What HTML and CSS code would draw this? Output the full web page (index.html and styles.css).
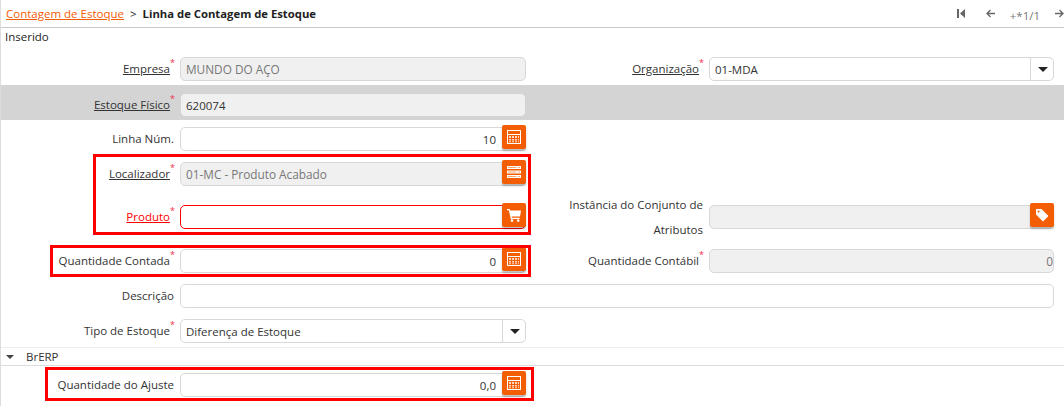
FILE: index.html
```html
<!DOCTYPE html>
<html lang="pt-BR">
<head>
  <meta charset="UTF-8" />
  <title>Linha de Contagem de Estoque</title>
  <link rel="stylesheet" href="styles.css">
</head>
<body>
  <svg class="sprites" width="0" height="0">
    <symbol id="calc" viewBox="0 0 14 14">
      <path fill="#fff" fill-rule="evenodd" d="M0 0h14v14H0zM1 1v3h12V1zM1 5v8h12V5z"/>
      <path fill="#ffd9c2" d="M2 6h2v2H2zM5 6h2v2H5zM8 6h2v2H8zM11 6h1v2h-1zM2 9h2v1.5H2zM5 9h2v1.5H5zM8 9h2v1.5H8zM11 9h1v1.5h-1zM2 11.2h2v1H2zM5 11.2h2v1H5zM8 11.2h2v1H8zM11 11.2h1v1h-1z"/>
    </symbol>
    <symbol id="locator" viewBox="0 0 15 13">
      <path fill="#fff" d="M0 0h15v3.4H0zM0 4.8h15v3.4H0zM0 9.6h15V13H0z"/>
      <path fill="#f9a26c" d="M1 1.2h9v1H1zM12 1.2h2v1h-2zM1 6h9v1H1zM12 6h2v1h-2zM1 10.8h9v1H1zM12 10.8h2v1h-2z"/>
    </symbol>
    <symbol id="cart" viewBox="0 0 14 14">
      <path fill="#fff" d="M0 1h2.6l.5 1.5H14l-1 6H4.6l.3 1.2H12.6V11H3.8L1.8 2.2H0z"/>
      <circle fill="#fff" cx="5" cy="12.6" r="1.3"/>
      <circle fill="#fff" cx="11.2" cy="12.6" r="1.3"/>
    </symbol>
    <symbol id="tag" viewBox="0 0 14 14">
      <path fill="#fff" fill-rule="evenodd" d="M1 1h5.5L13.5 8 8 13.5 1 6.5zM3.6 2.6a1 1 0 1 0 .01 0z"/>
    </symbol>
  </svg>

  <header class="title-bar">
    <div class="crumbs">
      <a class="crumb-link" href="#">Contagem de Estoque</a>
      <span class="crumb-sep">&gt;</span>
      <strong>Linha de Contagem de Estoque</strong>
    </div>
    <nav class="pager">
      <svg class="pager-first" viewBox="0 0 8 9"><path fill="#666" d="M0 0h2v9H0zM8 0v9L3 4.5z"/></svg>
      <svg class="pager-icon" viewBox="0 0 9 9"><path fill="none" stroke="#666" stroke-width="1.3" d="M9 4.5H1M4.5 1 1 4.5 4.5 8"/></svg>
      <span class="pager-text">+*1/1</span>
      <svg class="pager-icon" viewBox="0 0 9 9"><path fill="none" stroke="#666" stroke-width="1.3" d="M0 4.5h8M4.5 1 8 4.5 4.5 8"/></svg>
    </nav>
  </header>

  <div class="status">Inserido</div>

  <main class="form">
    <div class="row row-empresa">
      <label class="lbl"><u>Empresa</u><sup>*</sup></label>
      <div class="field field-half"><input class="inp ro" value="MUNDO DO AÇO" readonly></div>
      <label class="lbl lbl-right"><u>Organização</u><sup>*</sup></label>
      <div class="field field-right">
        <div class="combo"><input class="inp" value="01-MDA" readonly><span class="combo-btn"><i class="caret"></i></span></div>
      </div>
    </div>

    <div class="row row-band">
      <label class="lbl"><u>Estoque Físico</u><sup>*</sup></label>
      <div class="field field-half"><input class="inp band-inp" value="620074" readonly></div>
    </div>

    <div class="row row-linha">
      <label class="lbl">Linha Núm.</label>
      <div class="field field-half"><input class="inp num" value="10" readonly><button class="btn"><svg class="ico"><use href="#calc"/></svg></button></div>
    </div>

    <div class="row row-loc">
      <label class="lbl"><u>Localizador</u><sup>*</sup></label>
      <div class="field field-half"><input class="inp ro" value="01-MC - Produto Acabado" readonly><button class="btn"><svg class="ico"><use href="#locator"/></svg></button></div>
    </div>

    <div class="row row-prod">
      <label class="lbl lbl-red"><u>Produto</u><sup>*</sup></label>
      <div class="field field-half"><input class="inp inp-red" readonly><button class="btn"><svg class="ico"><use href="#cart"/></svg></button></div>
      <label class="lbl lbl-right lbl-two">Instância do Conjunto de Atributos</label>
      <div class="field field-right"><input class="inp ro" readonly><button class="btn"><svg class="ico"><use href="#tag"/></svg></button></div>
    </div>

    <div class="row row-qty">
      <label class="lbl">Quantidade Contada<sup>*</sup></label>
      <div class="field field-half"><input class="inp num" value="0" readonly><button class="btn"><svg class="ico"><use href="#calc"/></svg></button></div>
      <label class="lbl lbl-right">Quantidade Contábil<sup>*</sup></label>
      <div class="field field-right"><input class="inp ro num num-flush" value="0" readonly></div>
    </div>

    <div class="row row-desc">
      <label class="lbl">Descrição</label>
      <div class="field field-full"><input class="inp" readonly></div>
    </div>

    <div class="row row-tipo">
      <label class="lbl">Tipo de Estoque<sup>*</sup></label>
      <div class="field field-half">
        <div class="combo"><input class="inp" value="Diferença de Estoque" readonly><span class="combo-btn"><i class="caret"></i></span></div>
      </div>
    </div>

    <div class="group"><i class="caret caret-sm"></i><span>BrERP</span></div>

    <div class="row row-ajuste">
      <label class="lbl">Quantidade do Ajuste</label>
      <div class="field field-half"><input class="inp num" value="0,0" readonly><button class="btn"><svg class="ico"><use href="#calc"/></svg></button></div>
    </div>
  </main>

  <div class="mark mark-a"></div>
  <div class="mark mark-b"></div>
  <div class="mark mark-c"></div>
</body>
</html>
```

FILE: styles.css
```css
* {
  box-sizing: border-box;
}
html,
body {
  height: 406px;
  overflow: hidden;
}
body {
  margin: 0;
  position: relative;
  background: #fff;
  border-left: 1px solid #ddd;
  font-family: "Open Sans", sans-serif;
  font-size: 11.5px;
  color: #333;
}
.sprites {
  position: absolute;
}
.title-bar {
  height: 28px;
  display: flex;
  justify-content: space-between;
  align-items: center;
  padding: 0 0 0 5px;
  border-bottom: 1px solid #c8c8c8;
  color: #222;
}
.crumb-link {
  color: #f25c05;
}
.crumb-sep {
  margin: 0 3px;
}
.crumbs strong {
  font-size: 11.3px;
}
.pager {
  display: flex;
  align-items: center;
  gap: 15px;
  padding-bottom: 1px;
  color: #777;
}
.pager-first {
  width: 8px;
  height: 9px;
  margin-right: 6px;
}
.pager-icon {
  width: 9px;
  height: 9px;
}
.pager-text {
  margin-top: 4px;
}
.status {
  height: 25px;
  padding: 1px 4px;
  color: #222;
}
.row {
  display: flex;
  align-items: center;
}
.row-empresa {
  height: 32px;
}
.row-band {
  height: 35px;
  padding-top: 5px;
  background: #d4d4d4;
}
.row-linha {
  height: 38px;
}
.row-loc {
  height: 32px;
}
.row-prod {
  height: 54px;
}
.row-qty {
  height: 34px;
}
.row-desc {
  height: 36px;
}
.row-tipo {
  height: 33px;
  padding-top: 1px;
}
.row-ajuste {
  height: 38px;
}
.lbl {
  width: 173px;
  flex: none;
  padding-bottom: 2px;
  text-align: right;
  white-space: nowrap;
}
.lbl sup {
  display: inline-block;
  width: 4px;
  color: #f0304a;
  font-size: 9px;
  line-height: 0;
  text-align: left;
  vertical-align: 7px;
}
.lbl-red {
  color: #f00;
}
.lbl-right {
  width: 177px;
}
.lbl-two {
  white-space: normal;
  line-height: 25px;
  padding: 0 0 0 10px;
}
.field {
  display: flex;
  position: relative;
  flex: none;
  height: 24px;
  margin-left: 6px;
}
.field-half {
  width: 346px;
}
.field-right {
  width: 345px;
}
.field-full {
  width: 874px;
}
.inp {
  width: 100%;
  height: 24px;
  border: 1px solid #d8d8d8;
  border-radius: 5px;
  padding: 0 5px;
  background: #fff;
  font: inherit;
  color: #333;
  outline: none;
}
.ro,
.band-inp {
  background: #f0f0f0;
}
.ro {
  color: #777;
  font-size: 11.8px;
}
.band-inp {
  border-color: #d4d4d4;
}
.num {
  text-align: right;
  padding-right: 29px;
}
.num-flush {
  padding-right: 0;
}
.inp-red {
  border-color: #f00;
}
.btn {
  position: absolute;
  right: 0;
  top: -2px;
  width: 24px;
  height: 24px;
  padding: 0;
  border: 0;
  border-radius: 2px;
  background: #f35e04;
  box-shadow: 0 2px 2px rgba(0, 0, 0, .25);
  display: flex;
  align-items: center;
  justify-content: center;
}
.ico {
  width: 14px;
  height: 14px;
}
.combo {
  display: flex;
  width: 100%;
  position: relative;
}
.combo-btn {
  position: absolute;
  right: 0;
  top: 0;
  width: 24px;
  height: 24px;
  border-left: 1px solid #d8d8d8;
  display: flex;
  align-items: center;
  justify-content: center;
}
.caret {
  width: 0;
  height: 0;
  border: 5px solid transparent;
  border-top: 5px solid #222;
  border-bottom: 0;
}
.caret-sm {
  border-width: 4px;
  border-bottom: 0;
  border-top-color: #444;
  margin: 0 12px 0 1px;
}
.group {
  height: 19px;
  display: flex;
  align-items: center;
  padding-left: 4px;
  border-top: 1px solid #eee;
  border-bottom: 1px solid #ddd;
  color: #333;
}
/* red markup drawn over the screenshot */
.mark {
  position: absolute;
  border: 3px solid #f00;
}
.mark-a {
  left: 92px;
  top: 154px;
  width: 438px;
  height: 81px;
}
.mark-b {
  left: 49px;
  top: 245px;
  width: 481px;
  height: 32px;
}
.mark-c {
  left: 44px;
  top: 367px;
  width: 489px;
  height: 34px;
}
```
